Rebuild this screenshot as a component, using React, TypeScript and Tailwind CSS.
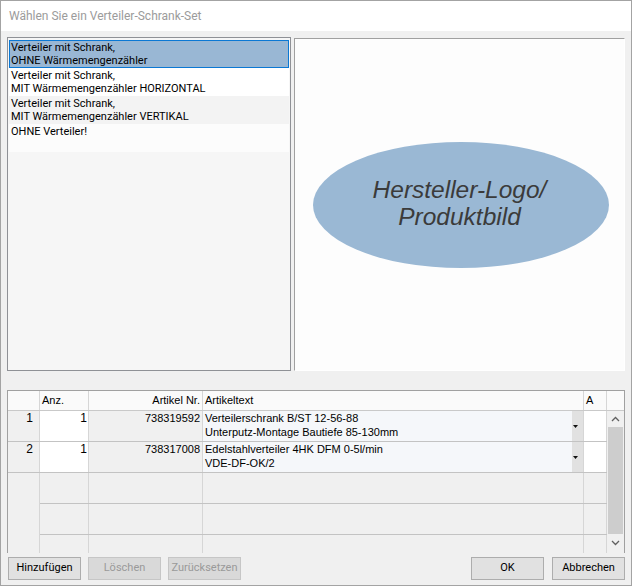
import React from "react";

const ui = "font-['Roboto','Liberation_Sans',sans-serif]";
const gf = "font-['Liberation_Sans',Arial,sans-serif]";

const items: { lines: string[]; bg: string; sel?: boolean }[] = [
  { lines: ["Verteiler mit Schrank,", "OHNE Wärmemengenzähler"], bg: "bg-[#99b7d4]", sel: true },
  { lines: ["Verteiler mit Schrank,", "MIT Wärmemengenzähler HORIZONTAL"], bg: "bg-white" },
  { lines: ["Verteiler mit Schrank,", "MIT Wärmemengenzähler VERTIKAL"], bg: "bg-[#f3f3f3]" },
  { lines: ["OHNE Verteiler!"], bg: "bg-[#fcfcfc]" },
];

const rows = [
  { n: "1", anz: "1", nr: "738319592", text: ["Verteilerschrank B/ST 12-56-88", "Unterputz-Montage Bautiefe 85-130mm"] },
  { n: "2", anz: "1", nr: "738317008", text: ["Edelstahlverteiler 4HK DFM 0-5l/min", "VDE-DF-OK/2"] },
];

function Btn({ label, disabled }: { label: string; disabled?: boolean }) {
  return (
    <div
      className={
        "w-[73px] h-[23px] flex items-center justify-center border text-[11px] " +
        (disabled
          ? "bg-[#d9d9d9] border-[#c6c6c6] text-[#9a9a9a]"
          : "bg-[#e1e1e1] border-[#adadad] text-black")
      }
    >
      {label}
    </div>
  );
}

export default function App() {
  return (
    <div className={"w-[632px] h-[586px] border border-[#a3a3a3] bg-[#f0f0f0] flex flex-col overflow-hidden " + ui}>
      <div className="h-[30px] shrink-0 bg-white flex items-center pl-[8px] text-[12px] text-[#9b9b9b]">
        Wählen Sie ein Verteiler-Schrank-Set
      </div>
      <div className="flex-1 flex flex-col px-[6px] pt-[6px]">
        <div className="flex gap-[3px] h-[334px] shrink-0">
          <div className="w-[284px] h-full border border-[#8f9196] bg-[#f6f6f6] pt-[2px] px-[1px]">
            {items.map((it, i) => (
              <div
                key={i}
                className={
                  "h-[28px] border pl-[1px] text-[11px] leading-[13px] text-black " +
                  it.bg +
                  (it.sel ? " border-[#0a78d4]" : " border-transparent")
                }
              >
                {it.lines.map((l, j) => (
                  <div key={j} className="whitespace-nowrap">{l}</div>
                ))}
              </div>
            ))}
          </div>
          <div className="w-[331px] h-[333px] mt-[1px] border-t border-l border-t-[#a0a0a0] border-l-[#a0a0a0] border-r border-b border-r-white border-b-white bg-[#fdfdfd] flex items-center justify-center">
            <div className="w-[296px] h-[126px] rounded-[50%] bg-[#9ab8d4] flex flex-col items-center justify-center ml-[2px]">
              <div className="font-['Liberation_Sans',Arial,sans-serif] italic text-[24.5px] leading-[27px] text-[#3b3b3b] text-center mb-[4px] mr-[2px]">
                Hersteller-Logo/
                <br />
                Produktbild
              </div>
            </div>
          </div>
        </div>

        <div className={"mt-[19px] h-[163px] shrink-0 border-t border-l border-r border-[#a0a0a0] flex flex-col overflow-hidden text-[11px] text-black " + gf}>
          <div className="h-[20px] shrink-0 flex bg-[#fafafa] border-b border-[#c9c9c9]">
            <div className="w-[32px] border-r border-[#d6d6d6]" />
            <div className="w-[49px] border-r border-[#d6d6d6] pl-[2px] flex items-center">Anz.</div>
            <div className="w-[114px] border-r border-[#d6d6d6] pr-[2px] flex items-center justify-end">Artikel Nr.</div>
            <div className="w-[381px] border-r border-[#d6d6d6] pl-[2px] flex items-center">Artikeltext</div>
            <div className="w-[23px] border-r border-[#d6d6d6] pl-[2px] flex items-center">A</div>
            <div className="w-[17px]" />
          </div>
          <div className="flex flex-1">
            <div className="w-[599px] flex flex-col">
              {rows.map((r) => (
                <div key={r.n} className="h-[31px] shrink-0 flex border-b border-[#c3c3c3]">
                  <div className="w-[32px] border-r border-[#d6d6d6] bg-[#f0f0f0] text-right pr-[6px] text-[12px] leading-[14px]">{r.n}</div>
                  <div className="w-[49px] border-r border-[#d6d6d6] bg-white text-right pr-[1px] text-[12px] leading-[14px]">{r.anz}</div>
                  <div className="w-[114px] border-r border-[#d6d6d6] bg-[#f0f0f0] text-right pr-[2px] leading-[14px]">{r.nr}</div>
                  <div className="w-[381px] border-r border-[#d6d6d6] flex">
                    <div className="w-[369px] bg-[#f5f7fa] pl-[2px] leading-[14px]">
                      {r.text.map((t, j) => (
                        <div key={j} className="whitespace-nowrap">{t}</div>
                      ))}
                    </div>
                    <div className="w-[11px] bg-[#e1e1e1] flex items-center pl-[1px]">
                      <svg width="5" height="3" viewBox="0 0 5 3">
                        <polygon points="0,0 5,0 2.5,3" fill="#111" />
                      </svg>
                    </div>
                  </div>
                  <div className="w-[23px] border-r border-[#d6d6d6] bg-white" />
                </div>
              ))}
              {[0, 1, 2].map((k) => (
                <div key={k} className="h-[31px] shrink-0 flex">
                  <div className="w-[32px] border-r border-[#d6d6d6]" />
                  <div className="flex flex-1 border-b border-[#c3c3c3]">
                    <div className="w-[49px] border-r border-[#d6d6d6]" />
                    <div className="w-[114px] border-r border-[#d6d6d6]" />
                    <div className="w-[381px] border-r border-[#d6d6d6]" />
                    <div className="w-[23px] border-r border-[#d6d6d6]" />
                  </div>
                </div>
              ))}
            </div>
            <div className="w-[17px] flex flex-col bg-[#f0f0f0]">
              <div className="h-[16px] shrink-0 flex items-center justify-center">
                <svg width="9" height="6" viewBox="0 0 9 6">
                  <path d="M1 5 L4.5 1.5 L8 5" stroke="#606060" strokeWidth="1.3" fill="none" />
                </svg>
              </div>
              <div className="h-[107px] shrink-0 mx-[1px] bg-[#cdcdcd]" />
              <div className="h-[17px] shrink-0 flex items-center justify-center">
                <svg width="9" height="6" viewBox="0 0 9 6">
                  <path d="M1 1 L4.5 4.5 L8 1" stroke="#606060" strokeWidth="1.3" fill="none" />
                </svg>
              </div>
            </div>
          </div>
        </div>

        <div className="mt-[4px] flex justify-between pl-[1px]">
          <div className="flex gap-[7px]">
            <Btn label="Hinzufügen" />
            <Btn label="Löschen" disabled />
            <Btn label="Zurücksetzen" disabled />
          </div>
          <div className="flex gap-[8px]">
            <Btn label="OK" />
            <Btn label="Abbrechen" />
          </div>
        </div>
      </div>
    </div>
  );
}
